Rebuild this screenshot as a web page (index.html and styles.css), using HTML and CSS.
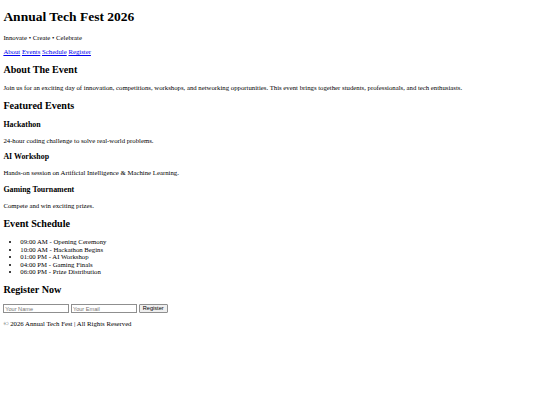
FILE: index.html
```html
<!DOCTYPE html>
<html>

<head>
  <title>Annual Tech Fest 2026</title>
  <link rel="stylesheet" href="styles.css">
</head>

<body>
  <header>
    <h1>Annual Tech Fest 2026</h1>
    <p>Innovate • Create • Celebrate</p>
    <nav>
      <a href="#about">About</a>
      <a href="#events">Events</a>
      <a href="#schedule">Schedule</a>
      <a href="#register">Register</a>
    </nav>
  </header>

  <section id="about">
    <h2>About The Event</h2>
    <p>Join us for an exciting day of innovation, competitions, workshops, and networking opportunities. This event brings together students, professionals, and tech enthusiasts.</p>
  </section>

  <section id="events">
    <h2>Featured Events</h2>
    <div class="event">
      <h3>Hackathon</h3>
      <p>24-hour coding challenge to solve real-world problems.</p>
    </div>
    <div class="event">
      <h3>AI Workshop</h3>
      <p>Hands-on session on Artificial Intelligence &amp; Machine Learning.</p>
    </div>
    <div class="event">
      <h3>Gaming Tournament</h3>
      <p>Compete and win exciting prizes.</p>
    </div>
  </section>

  <section id="schedule">
    <h2>Event Schedule</h2>
    <ul>
      <li>09:00 AM - Opening Ceremony</li>
      <li>10:00 AM - Hackathon Begins</li>
      <li>01:00 PM - AI Workshop</li>
      <li>04:00 PM - Gaming Finals</li>
      <li>06:00 PM - Prize Distribution</li>
    </ul>
  </section>

  <section id="register">
    <h2>Register Now</h2>
    <form>
      <input type="text" placeholder="Your Name">
      <input type="email" placeholder="Your Email">
      <button type="submit">Register</button>
    </form>
  </section>

  <footer>
    <p>&copy; 2026 Annual Tech Fest | All Rights Reserved</p>
  </footer>
</body>

</html>
```

FILE: styles.css
```css
body {
  font-family: "Liberation Serif", serif;
  font-size: 6.75px;
  line-height: 7.6px;
  margin: 0;
  padding: 0 3.375px;
  color: #000;
}

h1 {
  font-size: 13.5px;
  line-height: 15.6px;
  margin: 9.05px 0;
}

h2 {
  font-size: 10.125px;
  line-height: 11.4px;
  margin: 8.4px 0;
}

h3 {
  font-size: 7.9px;
  line-height: 9.3px;
  margin: 7.9px 0;
}

p {
  margin: 6.75px 0;
}

nav a {
  color: #0000ee;
}

ul {
  margin: 6.75px 0;
  padding-left: 16.875px;
}

form {
  margin: 0;
}

input {
  box-sizing: border-box;
  font-family: "Liberation Sans", sans-serif;
  font-size: 5.625px;
  line-height: 6.3px;
  width: 66px;
  height: 8.9px;
  padding: 0.4px 0.85px;
  border: 0.85px solid #8f8f8f;
  border-radius: 0;
  margin: 0;
  vertical-align: middle;
}

input::placeholder {
  color: #757575;
}

button {
  box-sizing: border-box;
  font-family: "Liberation Sans", sans-serif;
  font-size: 5.625px;
  line-height: 6.3px;
  height: 8.9px;
  padding: 0.4px 3px;
  border: 0.85px solid #8f8f8f;
  border-radius: 1px;
  background-color: #efefef;
  color: #000;
  margin: 0;
  vertical-align: middle;
}
```
